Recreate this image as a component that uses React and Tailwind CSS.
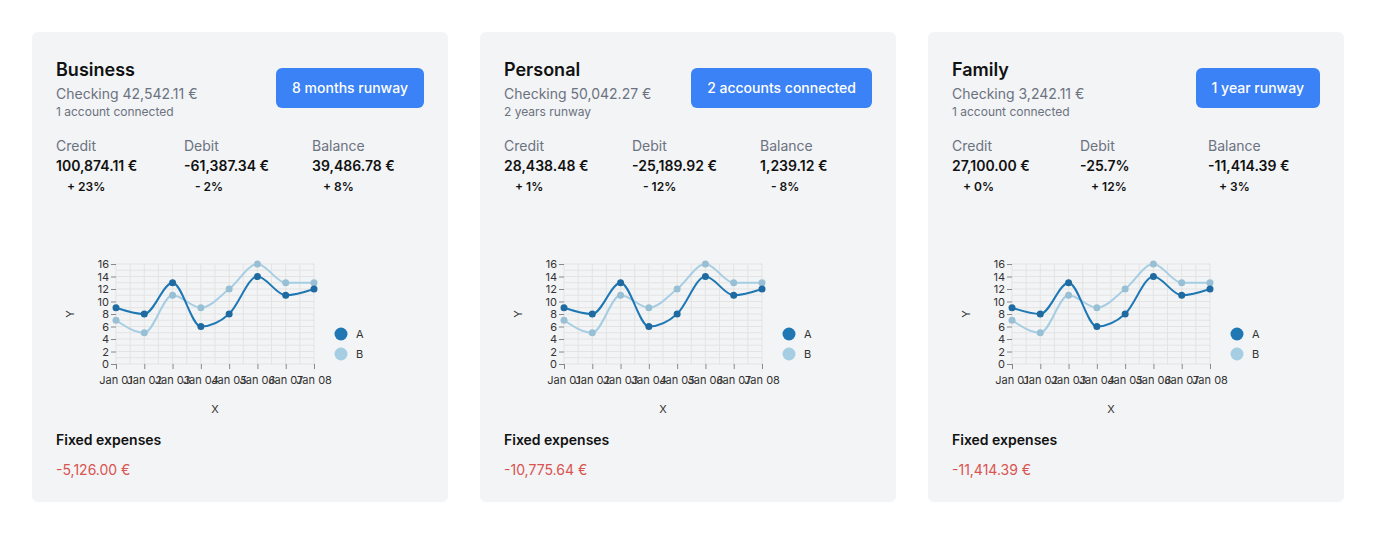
import React from "react";

const A = [9, 8, 13, 6, 8, 14, 11, 12];
const B = [7, 5, 11, 9, 12, 16, 13, 13];

const X0 = 60;
const X1 = 258;
const Y0 = 172;
const Y16 = 72;
const sx = (i) => X0 + ((X1 - X0) * i) / 7;
const sy = (v) => Y0 - ((Y0 - Y16) * v) / 16;

function monotonePath(pts) {
  const n = pts.length;
  const m = new Array(n).fill(0);
  for (let i = 1; i < n - 1; i++) {
    const [x0, y0] = pts[i - 1];
    const [x1, y1] = pts[i];
    const [x2, y2] = pts[i + 1];
    const h0 = x1 - x0;
    const h1 = x2 - x1;
    const s0 = (y1 - y0) / h0;
    const s1 = (y2 - y1) / h1;
    const p = (s0 * h1 + s1 * h0) / (h0 + h1);
    m[i] =
      (Math.sign(s0) + Math.sign(s1)) *
        Math.min(Math.abs(s0), Math.abs(s1), 0.5 * Math.abs(p)) || 0;
  }
  {
    const s = (pts[1][1] - pts[0][1]) / (pts[1][0] - pts[0][0]);
    m[0] = (3 * s - m[1]) / 2;
    const sl = (pts[n - 1][1] - pts[n - 2][1]) / (pts[n - 1][0] - pts[n - 2][0]);
    m[n - 1] = (3 * sl - m[n - 2]) / 2;
  }
  let d = `M${pts[0][0]},${pts[0][1]}`;
  for (let i = 0; i < n - 1; i++) {
    const [x0, y0] = pts[i];
    const [x1, y1] = pts[i + 1];
    const dx = (x1 - x0) / 3;
    d += ` C${x0 + dx},${y0 + dx * m[i]} ${x1 - dx},${y1 - dx * m[i + 1]} ${x1},${y1}`;
  }
  return d;
}

function Chart() {
  const ptsA = A.map((v, i) => [sx(i), sy(v)]);
  const ptsB = B.map((v, i) => [sx(i), sy(v)]);
  const vLines = [];
  for (let k = 0; k <= 14; k++) vLines.push(X0 + ((X1 - X0) * k) / 14);
  const hLines = [];
  for (let k = 0; k <= 16; k++) hLines.push(sy(k));
  const yTicks = [0, 2, 4, 6, 8, 10, 12, 14, 16];
  const labels = ["Jan 01", "Jan 02", "Jan 03", "Jan 04", "Jan 05", "Jan 06", "Jan 07", "Jan 08"];
  return (
    <svg width="368" height="237" className="block" style={{ fontFamily: "Inter, 'Liberation Sans', sans-serif" }}>
      <g stroke="#e3e3e3" strokeWidth="1">
        {vLines.map((x, i) => (
          <line key={"v" + i} x1={x} x2={x} y1={Y16} y2={Y0} />
        ))}
        {hLines.map((y, i) => (
          <line key={"h" + i} x1={X0} x2={X1} y1={y} y2={y} />
        ))}
      </g>
      <g stroke="#888" strokeWidth="1">
        {yTicks.map((t) => (
          <line key={"yt" + t} x1={X0 - 5} x2={X0} y1={sy(t) + 0.5} y2={sy(t) + 0.5} />
        ))}
        {labels.map((l, i) => (
          <line key={"xt" + i} x1={sx(i) + 0.5} x2={sx(i) + 0.5} y1={Y0} y2={Y0 + 5} />
        ))}
      </g>
      <g fontSize="11" fill="#333" textAnchor="end">
        {yTicks.map((t) => (
          <text key={"yl" + t} x={X0 - 7} y={sy(t) + 4}>
            {t}
          </text>
        ))}
      </g>
      <g fontSize="11" fill="#333" textAnchor="middle">
        {labels.map((l, i) => (
          <text key={"xl" + i} x={sx(i)} y={192}>
            {l}
          </text>
        ))}
      </g>
      <text x="159" y="221" fontSize="11" fill="#333" textAnchor="middle">
        X
      </text>
      <text
        x="0"
        y="0"
        fontSize="11"
        fill="#333"
        textAnchor="middle"
        transform="translate(18 122) rotate(-90)"
      >
        Y
      </text>
      <path d={monotonePath(ptsB)} fill="none" stroke="#a6cee3" strokeWidth="2" />
      <path d={monotonePath(ptsA)} fill="none" stroke="#1f78b4" strokeWidth="2" />
      {ptsB.map(([x, y], i) => (
        <circle key={"pb" + i} cx={x} cy={y} r="3.5" fill="#98bfd4" />
      ))}
      {ptsA.map(([x, y], i) => (
        <circle key={"pa" + i} cx={x} cy={y} r="3.5" fill="#1f6aa0" />
      ))}
      <circle cx="285" cy="142" r="6.5" fill="#1f78b4" />
      <circle cx="285" cy="162" r="6.5" fill="#a6cee3" />
      <text x="300" y="146" fontSize="11" fill="#333">
        A
      </text>
      <text x="300" y="166" fontSize="11" fill="#333">
        B
      </text>
    </svg>
  );
}

const cards = [
  {
    title: "Business",
    checking: "Checking 42,542.11 €",
    sub: "1 account connected",
    button: "8 months runway",
    stats: [
      ["Credit", "100,874.11 €", "+ 23%"],
      ["Debit", "-61,387.34 €", "- 2%"],
      ["Balance", "39,486.78 €", "+ 8%"],
    ],
    fixed: "-5,126.00 €",
  },
  {
    title: "Personal",
    checking: "Checking 50,042.27 €",
    sub: "2 years runway",
    button: "2 accounts connected",
    stats: [
      ["Credit", "28,438.48 €", "+ 1%"],
      ["Debit", "-25,189.92 €", "- 12%"],
      ["Balance", "1,239.12 €", "- 8%"],
    ],
    fixed: "-10,775.64 €",
  },
  {
    title: "Family",
    checking: "Checking 3,242.11 €",
    sub: "1 account connected",
    button: "1 year runway",
    stats: [
      ["Credit", "27,100.00 €", "+ 0%"],
      ["Debit", "-25.7%", "+ 12%"],
      ["Balance", "-11,414.39 €", "+ 3%"],
    ],
    fixed: "-11,414.39 €",
  },
];

function Card({ c }) {
  return (
    <div className="w-[416px] rounded-md bg-[#f3f4f6] p-6 pb-[22px]">
      <div className="flex items-center justify-between">
        <div>
          <div className="text-lg leading-7 font-semibold text-[#111]">{c.title}</div>
          <div className="text-sm leading-5 text-[#6b7280]">{c.checking}</div>
          <div className="text-xs leading-4 text-[#6b7280]">{c.sub}</div>
        </div>
        <div className="h-10 rounded-md bg-[#3b82f6] px-4 text-sm leading-10 font-medium text-white">
          {c.button}
        </div>
      </div>
      <div className="mt-4 flex">
        {c.stats.map(([l, v, p]) => (
          <div key={l} className="w-32 shrink-0">
            <div className="text-sm leading-5 text-[#6b7280]">{l}</div>
            <div className="text-sm leading-5 font-semibold text-[#111]">{v}</div>
            <div className="mt-[3px] ml-[11px] text-xs leading-4 font-semibold text-[#111]">{p}</div>
          </div>
        ))}
      </div>
      <div className="-mt-[3px]">
        <Chart />
      </div>
      <div className="mt-px text-sm leading-5 font-semibold text-[#111]">Fixed expenses</div>
      <div className="mt-2.5 text-sm leading-5 text-[#d9534f]">{c.fixed}</div>
    </div>
  );
}

export default function App() {
  return (
    <div className="flex gap-8 bg-white p-8" style={{ fontFamily: "Inter, 'Liberation Sans', sans-serif" }}>
      {cards.map((c) => (
        <Card key={c.title} c={c} />
      ))}
    </div>
  );
}
